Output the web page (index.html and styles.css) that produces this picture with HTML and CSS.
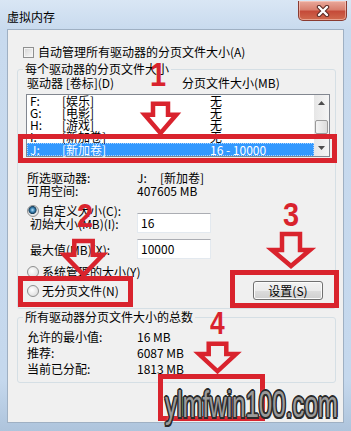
FILE: index.html
```html
<!DOCTYPE html>
<html lang="zh">
<head>
    <meta charset="UTF-8">
    <meta name="viewport" content="width=device-width, initial-scale=1.0">
    <title>虚拟内存</title>
    <link rel="stylesheet" href="styles.css">
</head>
<body>
    <div class="window">
        <div class="title-bar">
            <span class="title-text">虚拟内存</span>
            <div class="close-btn">
                <svg width="14" height="12" viewBox="0 0 14 12">
                    <path d="M3 2 L11 10 M11 2 L3 10" stroke="#5a2a24" stroke-width="4.4" stroke-linecap="round" fill="none"/>
                    <path d="M3 2 L11 10 M11 2 L3 10" stroke="#fff" stroke-width="2.4" stroke-linecap="round" fill="none"/>
                </svg>
            </div>
        </div>
        <div class="client">
            <div class="check-row"><span class="checkbox"></span><span>自动管理所有驱动器的分页文件大小(A)</span></div>

            <fieldset class="group group-drives">
                <legend>每个驱动器的分页文件大小</legend>
                <div class="group-body">
                    <div class="list-head"><span class="col-drive">驱动器 [卷标](D)</span><span>分页文件大小(MB)</span></div>
                    <div class="list-box">
                        <div class="list-rows">
                            <div class="list-item"><span class="drv">F:</span><span class="vol">[娱乐]</span><span>无</span></div>
                            <div class="list-item"><span class="drv">G:</span><span class="vol">[电影]</span><span>无</span></div>
                            <div class="list-item"><span class="drv">H:</span><span class="vol">[游戏]</span><span>无</span></div>
                            <div class="list-item"><span class="drv">I:</span><span class="vol">[新加卷]</span><span>无</span></div>
                            <div class="list-item selected"><span class="drv">J:</span><span class="vol">[新加卷]</span><span>16 - 10000</span></div>
                        </div>
                        <div class="scrollbar">
                            <div class="sb-btn">
                                <svg width="7" height="4" viewBox="0 0 7 4"><path d="M0 4 L3.5 0 L7 4 Z" fill="#4d4d4d"/></svg>
                            </div>
                            <div class="sb-track"><div class="sb-thumb"></div></div>
                            <div class="sb-btn">
                                <svg width="7" height="4" viewBox="0 0 7 4"><path d="M0 0 L7 0 L3.5 4 Z" fill="#4d4d4d"/></svg>
                            </div>
                        </div>
                    </div>

                    <div class="info-row first"><span class="info-label">所选驱动器:</span><span class="drv-short">J:</span><span>[新加卷]</span></div>
                    <div class="info-row"><span class="info-label">可用空间:</span><span>407605 MB</span></div>

                    <div class="radio-row first"><span class="radio checked"></span><span>自定义大小(C):</span></div>
                    <div class="input-row first"><span class="input-label">初始大小(MB)(I):</span><div class="text-input">16</div></div>
                    <div class="input-row"><span class="input-label">最大值(MB)(X):</span><div class="text-input">10000</div></div>
                    <div class="radio-row"><span class="radio"></span><span>系统管理的大小(Y)</span></div>
                    <div class="last-row">
                        <div class="radio-row"><span class="radio"></span><span>无分页文件(N)</span></div>
                        <button class="set-btn">设置(S)</button>
                    </div>
                </div>
            </fieldset>

            <fieldset class="group group-total">
                <legend>所有驱动器分页文件大小的总数</legend>
                <div class="group-body">
                    <div class="total-row"><span class="info-label">允许的最小值:</span><span>16 MB</span></div>
                    <div class="total-row"><span class="info-label">推荐:</span><span>6087 MB</span></div>
                    <div class="total-row"><span class="info-label">当前已分配:</span><span>1813 MB</span></div>
                </div>
            </fieldset>
        </div>

        <!-- annotations drawn over the dialog -->
        <div class="red-box box-1"></div>
        <div class="red-box box-2"></div>
        <div class="red-box box-3"></div>
        <div class="red-box box-4"></div>

        <span class="step-num num-1">1</span>
        <span class="step-num num-2">2</span>
        <span class="step-num num-3">3</span>
        <span class="step-num num-4">4</span>

        <svg class="arrow arrow-1" viewBox="0 0 42 36" preserveAspectRatio="none"><path d="M12 2 H30 V14 H40 L21 34 L2 14 H12 Z"/></svg>
        <svg class="arrow arrow-2" viewBox="0 0 42 36" preserveAspectRatio="none"><path d="M12 2 H30 V15 H40 L21 34 L2 15 H12 Z"/></svg>
        <svg class="arrow arrow-3" viewBox="0 0 42 36" preserveAspectRatio="none"><path d="M12 2 H30 V18 H40 L21 34 L2 18 H12 Z"/></svg>
        <svg class="arrow arrow-4" viewBox="0 0 42 36" preserveAspectRatio="none"><path d="M12 2 H30 V14 H40 L21 34 L2 14 H12 Z"/></svg>

        <div class="watermark">ylmfwin100.com</div>
    </div>
</body>
</html>
```

FILE: styles.css
```css
body {
    padding: 0;
    margin: 0;
    background: #fff;
}
.window {
    position: relative;
    width: 351px;
    height: 431px;
    box-sizing: border-box;
    padding: 0 7px 8px 7px;
    display: flex;
    flex-direction: column;
    overflow: hidden;
    background: linear-gradient(to bottom, #d9e6f4 0, #c8daee 30px, #c5d8ed 380px, #aec4dc 431px);
    font-family: "Noto Sans CJK SC", sans-serif;
    font-size: 12px;
    color: #000;
}

/* title bar */
.title-bar {
    height: 29px;
    flex: none;
    display: flex;
    justify-content: space-between;
    align-items: flex-start;
}
.title-text {
    margin-top: 10px;
    line-height: 14px;
    color: #000;
}
.close-btn {
    width: 49px;
    height: 20px;
    margin-top: 1px;
    margin-right: -3px;
    box-sizing: border-box;
    border: 1px solid #8a3b31;
    border-top: none;
    border-radius: 0 0 5px 5px;
    background: linear-gradient(to bottom, #e9a99b 0, #d9806f 45%, #c54b39 55%, #d06a4e 100%);
    box-shadow: inset 0 0 0 1px rgba(255, 220, 210, 0.5);
    display: flex;
    align-items: center;
    justify-content: center;
}

/* client area */
.client {
    flex: 1;
    box-sizing: border-box;
    background: #f0f0f0;
    border: 1px solid #9fb0c3;
}
.check-row {
    margin-top: 15px;
    padding-left: 15px;
    height: 14px;
    line-height: 14px;
    display: flex;
    align-items: center;
    gap: 4px;
}
.checkbox {
    width: 11px;
    height: 11px;
    box-sizing: border-box;
    border: 1px solid #8e8f8f;
    background: linear-gradient(135deg, #d4d4d4, #f9f9f9);
    box-shadow: inset 0 0 0 1px #f4f4f4;
}

.group {
    margin: 0 7px 0 9px;
    padding: 0;
    border: 1px solid #d5dfe5;
    border-radius: 3px;
    min-inline-size: 0;
}
.group legend {
    margin-left: 5px;
    padding: 0 2px;
    line-height: 14px;
}
.group-drives {
    margin-top: 3px;
}
.group-drives .group-body {
    padding: 0 5px 8px 8px;
}
.group-total {
    margin-top: 1px;
}
.group-total .group-body {
    padding: 5px 5px 5px 9px;
}

/* list */
.list-head {
    display: flex;
    line-height: 13px;
    padding-left: 1px;
}
.col-drive {
    width: 155px;
}
.list-box {
    margin-top: 5px;
    height: 63px;
    box-sizing: border-box;
    border: 1px solid #828790;
    background: #fff;
    display: flex;
}
.list-rows {
    flex: 1;
}
.list-item {
    height: 12px;
    line-height: 12px;
    display: flex;
    white-space: nowrap;
}
.list-item .drv {
    width: 32px;
    padding-left: 3px;
}
.list-item .vol {
    width: 148px;
}
.list-item.selected {
    height: 13px;
    line-height: 13px;
    background: #3399ff;
    color: #fff;
    outline: 1px dotted #a8d4ff;
    outline-offset: -1px;
}
.scrollbar {
    width: 15px;
    display: flex;
    flex-direction: column;
    background: linear-gradient(to right, #e6e6e6, #f5f5f5);
}
.sb-btn {
    height: 16px;
    display: flex;
    align-items: center;
    justify-content: center;
}
.sb-track {
    flex: 1;
}
.sb-thumb {
    margin: 9px 1px 0 1px;
    height: 14px;
    box-sizing: border-box;
    border: 1px solid #9a9a9a;
    border-radius: 2px;
    background: linear-gradient(to right, #f4f4f4, #dcdcdc);
}

/* drive info */
.info-row {
    display: flex;
    line-height: 13px;
    padding-left: 1px;
}
.info-row.first {
    margin-top: 14px;
}
.info-label {
    width: 110px;
}
.drv-short {
    width: 23px;
}

/* options */
.radio-row {
    display: flex;
    align-items: center;
    gap: 3px;
    line-height: 13px;
    padding-left: 1px;
    margin-top: 6px;
}
.radio-row.first {
    margin-top: 7px;
}
.radio {
    width: 12px;
    height: 12px;
    box-sizing: border-box;
    border: 1px solid #8e8f8f;
    border-radius: 50%;
    background: radial-gradient(circle at 40% 40%, #ffffff 0, #e2e2e2 70%, #cfcfcf 100%);
}
.radio.checked {
    background: radial-gradient(circle at 45% 40%, #b9e2f7 0, #3f86b6 25%, #153e5c 45%, #e8e8e8 55%, #d4d4d4 100%);
}
.input-row {
    display: flex;
    align-items: center;
    height: 20px;
    margin-top: 6px;
    padding-left: 4px;
}
.input-row.first {
    margin-top: -4px;
}
.input-label {
    width: 107px;
}
.text-input {
    width: 74px;
    height: 20px;
    box-sizing: border-box;
    border: 1px solid #e3e9ef;
    border-top-color: #abadb3;
    background: #fff;
    padding-left: 3px;
    line-height: 18px;
}
.last-row {
    display: flex;
    align-items: center;
    justify-content: space-between;
    margin-top: 3px;
}
.last-row .radio-row {
    margin-top: 0;
}
.set-btn {
    width: 70px;
    height: 19px;
    margin-right: 7px;
    padding: 0;
    border: 1px solid #707070;
    border-radius: 3px;
    background: linear-gradient(to bottom, #f2f2f2 0, #ebebeb 50%, #dddddd 51%, #cfcfcf 100%);
    box-shadow: inset 0 0 0 1px #fbfbfb;
    font-family: "Noto Sans CJK SC", sans-serif;
    font-size: 12px;
    line-height: 17px;
    color: #000;
}

/* totals */
.total-row {
    display: flex;
    line-height: 16px;
}

/* annotations */
.red-box {
    position: absolute;
    box-sizing: border-box;
    border: 5px solid #d9232d;
}
.box-1 { left: 18px; top: 134px; width: 319px; height: 29px; }
.box-2 { left: 18px; top: 276px; width: 115px; height: 31px; }
.box-3 { left: 230px; top: 270px; width: 109px; height: 38px; }
.box-4 { left: 158px; top: 374px; width: 107px; height: 47px; }

.step-num {
    position: absolute;
    font-family: "Liberation Sans", Arial, sans-serif;
    font-size: 34px;
    font-weight: bold;
    line-height: 34px;
    color: #d9232d;
    transform: scaleX(0.85);
    transform-origin: left top;
}
.num-1 { left: 150px; top: 57px; }
.num-2 { left: 77px; top: 198px; }
.num-3 { left: 283px; top: 197px; }
.num-4 { left: 210px; top: 307px; font-size: 31px; }

.arrow {
    position: absolute;
    overflow: visible;
}
.arrow path {
    fill: none;
    stroke: #d9232d;
    stroke-width: 4.5;
    stroke-linejoin: miter;
    vector-effect: non-scaling-stroke;
}
.arrow-1 { left: 143px; top: 102px; width: 35px; height: 33px; }
.arrow-2 { left: 62px; top: 239px; width: 43px; height: 38px; }
.arrow-3 { left: 270px; top: 232px; width: 42px; height: 36px; }
.arrow-4 { left: 197px; top: 342px; width: 41px; height: 31px; }

.watermark {
    position: absolute;
    left: 165px;
    top: 387px;
    font-family: "Liberation Sans", Arial, sans-serif;
    font-size: 36px;
    line-height: 36px;
    white-space: nowrap;
    color: #9a9a9a;
    transform: scaleX(0.67);
    transform-origin: left top;
    text-shadow: -1.5px -1.5px 0 #2b2b2b, 1.5px -1.5px 0 #2b2b2b, -1.5px 1.5px 0 #2b2b2b, 1.5px 1.5px 0 #2b2b2b,
        0 -2px 0 #2b2b2b, 0 2px 0 #2b2b2b, -2px 0 0 #2b2b2b, 2px 0 0 #2b2b2b, 0 0 4px #fff;
}
```
